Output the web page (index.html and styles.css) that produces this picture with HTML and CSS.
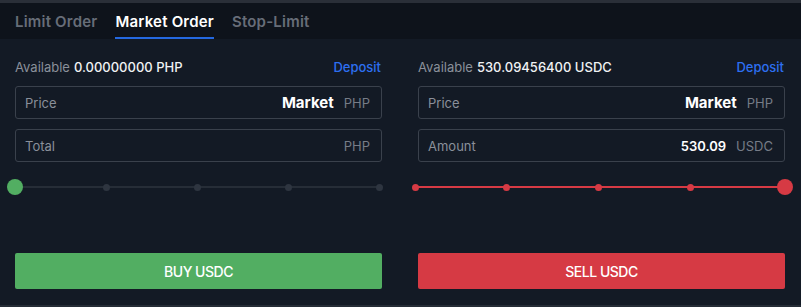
FILE: index.html
```html
<!DOCTYPE html>
<html>
<head>
<meta charset="utf-8">
<link rel="stylesheet" href="styles.css">
</head>
<body>
<div class="topbar"></div>
<nav class="tabs">
  <div class="tab">Limit Order</div>
  <div class="tab active">Market Order</div>
  <div class="tab">Stop-Limit</div>
</nav>
<main class="panel">
  <section class="col">
    <div class="avail"><span class="lbl">Available</span> <span class="val">0.00000000 PHP</span><a class="deposit">Deposit</a></div>
    <div class="field"><span class="flabel">Price</span><span class="fval big">Market</span><span class="unit">PHP</span></div>
    <div class="field"><span class="flabel">Total</span><span class="fval"></span><span class="unit">PHP</span></div>
    <div class="slider buy">
      <div class="track"></div>
      <span class="dot" style="left:25%"></span>
      <span class="dot" style="left:50%"></span>
      <span class="dot" style="left:75%"></span>
      <span class="dot" style="left:100%"></span>
      <span class="thumb" style="left:0%"></span>
    </div>
    <button class="btn buy-btn">BUY USDC</button>
  </section>
  <section class="col">
    <div class="avail"><span class="lbl">Available</span> <span class="val">530.09456400 USDC</span><a class="deposit">Deposit</a></div>
    <div class="field"><span class="flabel">Price</span><span class="fval big">Market</span><span class="unit">PHP</span></div>
    <div class="field"><span class="flabel">Amount</span><span class="fval">530.09</span><span class="unit">USDC</span></div>
    <div class="slider sell">
      <div class="track"></div>
      <span class="dot" style="left:0%"></span>
      <span class="dot" style="left:25%"></span>
      <span class="dot" style="left:50%"></span>
      <span class="dot" style="left:75%"></span>
      <span class="thumb" style="left:100%"></span>
    </div>
    <button class="btn sell-btn">SELL USDC</button>
  </section>
</main>
<div class="footer-line"></div>
</body>
</html>
```
FILE: styles.css
```css
* { box-sizing: border-box; }
html, body { margin: 0; padding: 0; }
body {
  background: #131a25;
  font-family: Inter, "Noto Sans", sans-serif;
  width: 801px;
  height: 307px;
  overflow: hidden;
  display: flex;
  flex-direction: column;
}
.topbar { height: 3px; background: #2a2f38; }
.tabs {
  height: 36px;
  background: #0e131b;
  display: flex;
  gap: 18px;
  padding: 0 15px;
}
.tab {
  display: flex;
  align-items: center;
  font-size: 15px;
  font-weight: 600;
  color: #676d78;
  border-bottom: 2px solid transparent;
  padding-top: 2px;
  letter-spacing: 0.2px;
}
.tab.active { color: #ffffff; border-bottom-color: #2468e0; }
.panel {
  flex: 1;
  display: grid;
  grid-template-columns: 367px 367px;
  gap: 36px;
  padding: 19px 16px 0 15px;
}
.col { display: flex; flex-direction: column; }
.avail {
  height: 18px;
  display: flex;
  align-items: center;
  font-size: 13px;
  margin-bottom: 10px;
}
.avail .lbl { color: #8a909a; margin-right: 4px; }
.avail .val { color: #f0f2f4; font-weight: 500; }
.deposit { margin-left: auto; color: #2d6ff0; font-weight: 500; margin-right: 1px; }
.field {
  height: 33px;
  border: 1px solid #3a414c;
  border-radius: 3px;
  display: flex;
  align-items: center;
  padding: 0 11px 0 9px;
  margin-bottom: 10px;
  font-size: 13px;
}
.flabel { color: #8a909a; }
.fval { margin-left: auto; color: #ffffff; font-weight: 600; margin-right: 10px; }
.fval.big { font-size: 15px; font-weight: 700; }
.unit { color: #767c87; }
.slider {
  position: relative;
  height: 16px;
  margin-top: 7px;
}
.slider.buy { margin-right: 3px; }
.slider.sell { margin-left: -3px; margin-right: 3px; }
.track {
  position: absolute;
  left: 0; right: 0; top: 7px;
  height: 2px;
  background: #262d37;
}
.dot {
  position: absolute;
  top: 4.5px;
  width: 7px; height: 7px;
  margin-left: -3.5px;
  border-radius: 50%;
  background: #2e3540;
}
.thumb {
  position: absolute;
  top: 0;
  width: 16px; height: 16px;
  margin-left: -8px;
  border-radius: 50%;
}
.buy .thumb { background: #52ae62; }
.sell .track { background: #d63a44; }
.sell .dot { background: #d63a44; }
.sell .thumb { background: #d63a44; margin-left: -5px; }
.btn {
  margin-top: 58px;
  height: 36px;
  border: none;
  border-radius: 2px;
  color: #ffffff;
  font-family: Inter, "Noto Sans", sans-serif;
  font-size: 14px;
  font-weight: 500;
  letter-spacing: -0.5px;
}
.buy-btn { background: #52ae62; }
.sell-btn { background: #d63a44; }
.footer-line { height: 2px; background: #252c36; }
```
